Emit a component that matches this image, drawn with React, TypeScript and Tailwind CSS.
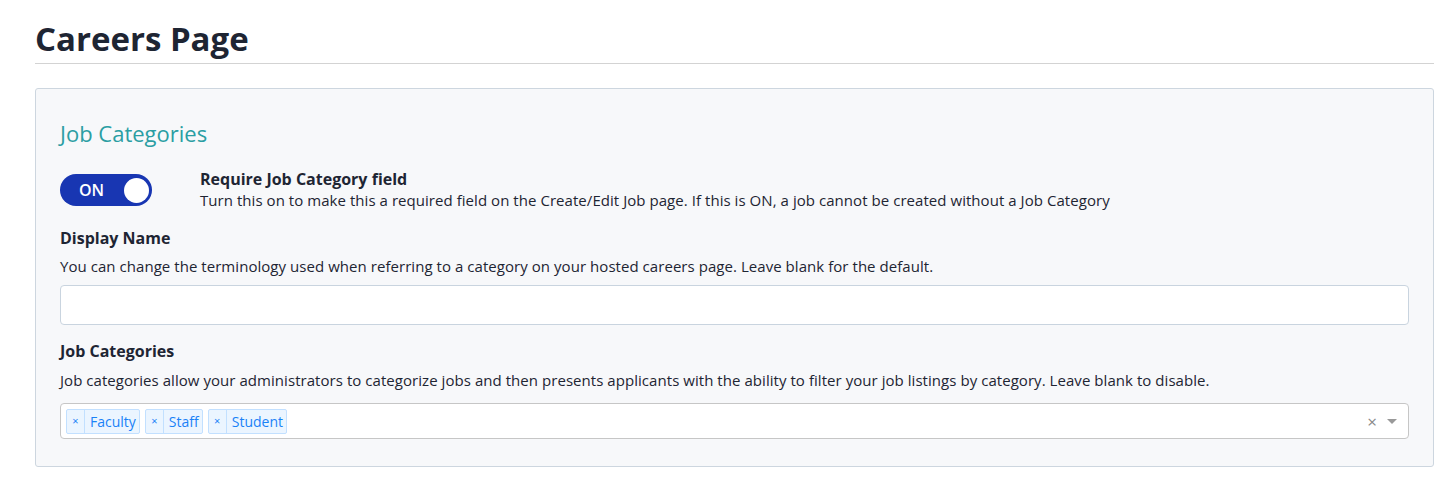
import { useState } from 'react';

const tags = ['Faculty', 'Staff', 'Student'];

const App = () => {
  const [on, setOn] = useState(true);
  const [displayName, setDisplayName] = useState('');

  return (
    <div className="min-h-screen bg-white font-['Open_Sans','Liberation_Sans',sans-serif] text-[#1e2533]">
      <div className="pl-[35px] pr-[19px] pt-[19px]">
        {/* Page Header */}
        <h1 className="text-[33px] font-bold leading-[40px] pb-[4px] border-b border-[#d3d3d3]">
          Careers Page
        </h1>

        {/* Settings Panel */}
        <div className="mt-[24px] bg-[#f7f8fa] border border-[#cdd6df] rounded-[3px] px-[24px] pt-[30px] pb-[27px]">
          <h2 className="text-[22px] leading-[28px] text-[#2b9ea3]">Job Categories</h2>

          <div className="flex items-start mt-[21px]">
            <button
              onClick={() => setOn(!on)}
              className="relative w-[92px] h-[32px] mt-[6px] rounded-full bg-[#1836b2] flex items-center shrink-0"
            >
              <span className="pl-[19px] text-white text-[16px] font-semibold">
                {on ? 'ON' : 'OFF'}
              </span>
              <span className="absolute right-[3.5px] top-[3.5px] w-[25px] h-[25px] rounded-full bg-white" />
            </button>
            <div className="ml-[48px]">
              <div className="text-[16px] font-bold leading-[22px]">Require Job Category field</div>
              <div className="text-[15px] leading-[20px] tracking-[0.05px]">
                Turn this on to make this a required field on the Create/Edit Job page. If this is ON, a job cannot be created without a Job Category
              </div>
            </div>
          </div>

          <div className="mt-[17px] text-[16px] font-bold leading-[22px]">Display Name</div>
          <div className="mt-[7px] text-[15px] leading-[20px] tracking-[0.05px]">
            You can change the terminology used when referring to a category on your hosted careers page. Leave blank for the default.
          </div>
          <input
            type="text"
            value={displayName}
            onChange={(e) => setDisplayName(e.target.value)}
            className="mt-[9px] block w-full h-[40px] px-3 bg-white border border-[#c9d4df] rounded-[4px] text-[15px] focus:outline-none"
          />

          <div className="mt-[15px] text-[16px] font-bold leading-[22px]">Job Categories</div>
          <div className="mt-[8px] text-[15px] leading-[20px] tracking-[0.05px]">
            Job categories allow your administrators to categorize jobs and then presents applicants with the ability to filter your job listings by category. Leave blank to disable.
          </div>

          {/* Multi Select */}
          <div className="mt-[13px] h-[36px] bg-white border border-[#c6c6c6] rounded-[4px] flex items-center pl-[5px] pr-[11px]">
            <div className="flex-1 flex items-center gap-[5px]">
              {tags.map((tag) => (
                <div
                  key={tag}
                  className="flex items-stretch h-[25px] bg-[#ebf5ff] border border-[#c2e0ff] rounded-[2px] text-[#1a82f7] text-[14px]"
                >
                  <span className="w-[18px] flex items-center justify-center border-r border-[#c2e0ff] text-[11px]">×</span>
                  <span className="pl-[5px] pr-[3px] flex items-center">{tag}</span>
                </div>
              ))}
            </div>
            <span className="text-[#888] text-[17px] leading-none mr-[10px]">×</span>
            <span className="w-0 h-0 border-l-[5px] border-r-[5px] border-t-[5px] border-l-transparent border-r-transparent border-t-[#999]" />
          </div>
        </div>
      </div>
    </div>
  );
};

export default App;
